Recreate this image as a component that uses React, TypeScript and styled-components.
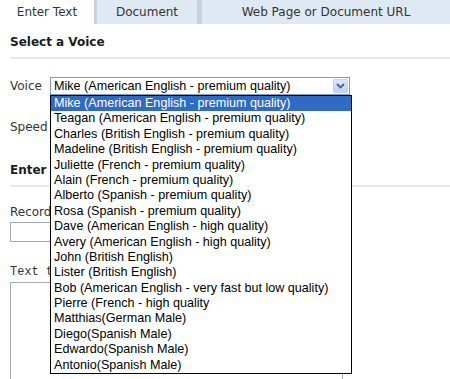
import React from "react";
import styled, { createGlobalStyle } from "styled-components";

const GlobalStyle = createGlobalStyle`
  body {
    margin: 0;
    background: #ffffff;
    font-family: "DejaVu Sans", Verdana, sans-serif;
    font-size: 12px;
    color: #333333;
  }
`;

const voices = [
  "Mike (American English - premium quality)",
  "Teagan (American English - premium quality)",
  "Charles (British English - premium quality)",
  "Madeline (British English - premium quality)",
  "Juliette (French - premium quality)",
  "Alain (French - premium quality)",
  "Alberto (Spanish - premium quality)",
  "Rosa (Spanish - premium quality)",
  "Dave (American English - high quality)",
  "Avery (American English - high quality)",
  "John (British English)",
  "Lister (British English)",
  "Bob (American English - very fast but low quality)",
  "Pierre (French - high quality",
  "Matthias(German Male)",
  "Diego(Spanish Male)",
  "Edwardo(Spanish Male)",
  "Antonio(Spanish Male)",
];

const Page = styled.div`
  width: 450px;
  height: 379px;
  overflow: hidden;
  position: relative;
`;

const TabBar = styled.div`
  display: flex;
  height: 24px;
  background: #c8d2dd;
`;

const Tab = styled.div<{ $active?: boolean; $width: number; $gap: number }>`
  width: ${(p) => p.$width}px;
  margin-right: ${(p) => p.$gap}px;
  display: flex;
  align-items: center;
  justify-content: center;
  background: ${(p) => (p.$active ? "#ffffff" : "#dfe9f4")};
  color: #333333;
  font-size: 12px;
  white-space: nowrap;
  &:last-child {
    flex: 1;
    margin-right: 0;
  }
`;

const Panel = styled.div`
  padding: 0 0 0 10px;
  display: flex;
  flex-direction: column;
`;

const Heading = styled.div<{ $top: number }>`
  margin-top: ${(p) => p.$top}px;
  line-height: 14px;
  font-size: 12px;
  font-weight: bold;
  color: #1a1a1a;
  padding-bottom: 8px;
  border-bottom: 2px solid #e9e9e9;
`;

const Row = styled.div<{ $top: number }>`
  margin-top: ${(p) => p.$top}px;
  display: flex;
  align-items: center;
  height: 18px;
`;

const Label = styled.div<{ $mono?: boolean; $top?: number }>`
  width: 40px;
  line-height: 14px;
  margin-top: ${(p) => p.$top ?? 0}px;
  font-family: ${(p) =>
    p.$mono ? '"Liberation Mono", "Courier New", monospace' : '"DejaVu Sans", Verdana, sans-serif'};
  font-size: 12px;
  white-space: nowrap;
`;

const SelectWrap = styled.div<{ $width: number }>`
  position: relative;
  width: ${(p) => p.$width}px;
  height: 18px;
  box-sizing: border-box;
  border: 1px solid #7f9db9;
  background: #ffffff;
  display: flex;
  align-items: center;
  font-family: "Liberation Sans", Arial, sans-serif;
  font-size: 12.6px;
  color: #000000;
`;

const SelectText = styled.span`
  flex: 1;
  padding-left: 3px;
  white-space: nowrap;
  overflow: hidden;
`;

const ArrowButton = styled.div`
  width: 15px;
  height: 14px;
  margin-right: 1px;
  box-sizing: border-box;
  border: 1px solid #c3d3fd;
  border-radius: 1px;
  background: linear-gradient(#dde8ff, #bccffb);
  display: flex;
  align-items: center;
  justify-content: center;
`;

const DropList = styled.div`
  position: absolute;
  top: 17px;
  left: -1px;
  width: 302px;
  box-sizing: border-box;
  border: 1px solid #000000;
  background: #ffffff;
  z-index: 10;
`;

const Option = styled.div<{ $selected?: boolean }>`
  height: 15.4px;
  line-height: 15px;
  padding-left: 3px;
  white-space: nowrap;
  overflow: hidden;
  background: ${(p) => (p.$selected ? "#316ac5" : "transparent")};
  color: ${(p) => (p.$selected ? "#ffffff" : "#000000")};
`;

const TextInput = styled.div<{ $height: number; $top: number }>`
  margin-top: ${(p) => p.$top}px;
  width: 333px;
  height: ${(p) => p.$height}px;
  box-sizing: border-box;
  border: 1px solid #a5acb2;
  background: #ffffff;
`;

const Chevron = () => (
  <svg width="9" height="6" viewBox="0 0 9 6">
    <path d="M1 1 L4.5 4.5 L8 1" fill="none" stroke="#4d6185" strokeWidth="1.8" />
  </svg>
);

export default function App() {
  return (
    <Page>
      <GlobalStyle />
      <TabBar>
        <Tab $active $width={94} $gap={3}>Enter Text</Tab>
        <Tab $width={100} $gap={5}>Document</Tab>
        <Tab $width={248} $gap={0}>Web Page or Document URL</Tab>
      </TabBar>
      <Panel>
        <Heading $top={11}>Select a Voice</Heading>
        <Row $top={18}>
          <Label>Voice</Label>
          <SelectWrap $width={300}>
            <SelectText>{voices[0]}</SelectText>
            <ArrowButton>
              <Chevron />
            </ArrowButton>
            <DropList>
              {voices.map((v, i) => (
                <Option key={v} $selected={i === 0}>
                  {v}
                </Option>
              ))}
            </DropList>
          </SelectWrap>
        </Row>
        <Row $top={23}>
          <Label>Speed</Label>
          <SelectWrap $width={120}>
            <SelectText>Normal</SelectText>
          </SelectWrap>
        </Row>
        <Heading $top={27}>Enter Text</Heading>
        <Label $top={18}>Record name</Label>
        <TextInput $top={3} $height={20} />
        <Label $mono $top={23}>Text to speak</Label>
        <TextInput $top={3} $height={120} />
      </Panel>
    </Page>
  );
}
